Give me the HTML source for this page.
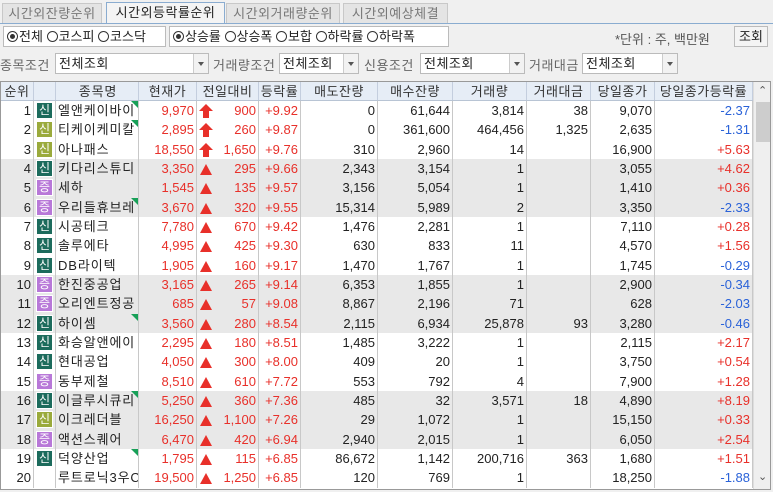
<!DOCTYPE html>
<html><head><meta charset="utf-8"><style>
*{margin:0;padding:0;box-sizing:border-box}
body{width:773px;height:492px;overflow:hidden;background:#f0f0f0;font-family:"Liberation Sans","Noto Sans CJK KR","NanumGothic",sans-serif;font-size:12px;color:#222;position:relative}
.a{position:absolute}
.tab{position:absolute;top:3px;height:20px;border:1px solid #c8c8c8;border-bottom:none;background:#e4e4e4;color:#777;font-size:13px;text-align:center;line-height:19px;letter-spacing:0.5px}
.box{position:absolute;background:#fff;border:1px solid #bbb;height:21px;line-height:19px;font-size:13px;padding-left:3px}
.dd{position:absolute;background:#fff;border:1px solid #bbb;height:21px;line-height:19px;font-size:13px;padding-left:3px;letter-spacing:0.5px}
.dd i{position:absolute;right:0;top:0;width:15px;height:19px;border-left:1px solid #ccc;background:#f2f2f2}
.dd i:after{content:"";position:absolute;left:4px;top:8px;border:3.5px solid transparent;border-top:4px solid #555}
.lbl{position:absolute;top:55px;color:#666;font-size:13px;letter-spacing:0.5px}
.rad{display:inline-block;width:11px;height:11px;border:1px solid #333;border-radius:50%;vertical-align:-1px;margin-right:1px;position:relative}
.rad.on:after{content:"";position:absolute;left:2px;top:2px;width:5px;height:5px;border-radius:50%;background:#333}
.grid{position:absolute;left:0;top:81px;width:771px;height:409px;border:1px solid #999;background:#fff;overflow:hidden}
.row{position:absolute;left:0;height:19.33px;width:752px;line-height:19px;font-size:13px}
.row>span{position:absolute;top:0;height:100%;border-right:1px solid #c8c8c8;text-align:right;padding-right:2px;white-space:nowrap;overflow:hidden}
.hd{background:#e6edf6;height:19px;top:0;border-bottom:1px solid #b8c4d4;letter-spacing:0.5px}
.hd>span{text-align:center;padding:0;color:#333;border-right:1px solid #c4cede}
.c0{left:0;width:33px}.c1{left:33px;width:22px}.c2{left:55px;width:83px}.c3{left:138px;width:58px}.c4{left:196px;width:62px}.c5{left:258px;width:42px}.c6{left:300px;width:77px}.c7{left:377px;width:75px}.c8{left:452px;width:74px}.c9{left:526px;width:64px}.c10{left:590px;width:64px}.c11{left:654px;width:98px}
.row>span.c2{text-align:left;padding-left:2px;letter-spacing:0.9px}
.row>span.c1{padding:0}
.row>span.c4 b{position:absolute;right:2px;font-weight:normal}
.g{background:#e8e8e8}
.r{color:#e8302a}.bl{color:#2a62d8}
.ic{position:absolute;left:2px;top:1px;width:17px;height:17px;color:#fff;font-size:12px;line-height:15px;text-align:center;border:1px solid #fff;font-style:normal}
.t{background:#1c6b5c}.o{background:#9aaa3c}.p{background:#b878d8}
.tri{position:absolute;right:0;top:0;width:0;height:0;border-left:7px solid transparent;border-top:7px solid #18a058}
.up{position:absolute;left:3px;top:5px;width:0;height:0;border-left:6px solid transparent;border-right:6px solid transparent;border-bottom:11px solid #e8302a}
.fa{position:absolute;left:2px;top:3px;width:14px;height:14px}
.fa:before{content:"";position:absolute;left:0;top:0;border-left:7px solid transparent;border-right:7px solid transparent;border-bottom:7px solid #e8302a}
.fa:after{content:"";position:absolute;left:4px;top:7px;width:6px;height:7px;background:#e8302a}
.sb{position:absolute;left:752px;top:0;width:18px;height:407px;background:#efefef;border-left:1px solid #ddd}
</style></head><body>
<div class="tab" style="left:2px;width:100px">시간외잔량순위</div>
<div class="tab" style="left:106px;width:119px;background:#f4f4f4;color:#222;border-color:#8aacd0;top:2px;height:22px">시간외등락률순위</div>
<div class="tab" style="left:226px;width:114px">시간외거래량순위</div>
<div class="tab" style="left:343px;width:105px">시간외예상체결</div>
<div class="a" style="left:0;top:23px;width:773px;height:1px;background:#8aacd0"></div>
<div class="box" style="left:3px;top:26px;width:163px"><span class="rad on"></span>전체 <span class="rad"></span>코스피 <span class="rad"></span>코스닥</div>
<div class="box" style="left:169px;top:26px;width:280px"><span class="rad on"></span>상승률 <span class="rad"></span>상승폭 <span class="rad"></span>보합 <span class="rad"></span>하락률 <span class="rad"></span>하락폭</div>
<div class="a" style="left:615px;top:29px;font-size:13px;color:#555">*단위 : 주, 백만원</div>
<div class="box" style="left:734px;top:26px;width:34px;background:#f4f4f4;padding-left:4px">조회</div>
<div class="lbl" style="left:0">종목조건</div>
<div class="dd" style="left:55px;top:53px;width:154px">전체조회<i></i></div>
<div class="lbl" style="left:213px">거래량조건</div>
<div class="dd" style="left:279px;top:53px;width:80px">전체조회<i></i></div>
<div class="lbl" style="left:364px">신용조건</div>
<div class="dd" style="left:420px;top:53px;width:105px">전체조회<i></i></div>
<div class="lbl" style="left:529px">거래대금</div>
<div class="dd" style="left:582px;top:53px;width:96px">전체조회<i></i></div>
<div class="grid">
<div class="row hd"><span class="c0">순위</span><span class="c1"></span><span class="c2" style="text-align:center">종목명</span><span class="c3">현재가</span><span class="c4" style="text-align:center">전일대비</span><span class="c5">등락률</span><span class="c6">매도잔량</span><span class="c7">매수잔량</span><span class="c8">거래량</span><span class="c9">거래대금</span><span class="c10">당일종가</span><span class="c11">당일종가등락률</span></div>
<div id="rows"></div>
<div class="sb"><div class="a" style="left:4px;top:2px;font-size:11px;color:#555">&#8963;</div><div class="a" style="left:2px;top:20px;width:14px;height:40px;background:#cdcdcd"></div><div class="a" style="left:4px;top:388px;font-size:11px;color:#555">&#8964;</div></div>
</div>
<script>
var d=[
[1,'t','엘앤케이바이',1,'9,970',1,'900','+9.92','0','61,644','3,814','38','9,070','-2.37'],
[2,'o','티케이케미칼',1,'2,895',1,'260','+9.87','0','361,600','464,456','1,325','2,635','-1.31'],
[3,'o','아나패스',0,'18,550',1,'1,650','+9.76','310','2,960','14','','16,900','+5.63'],
[4,'t','키다리스튜디',0,'3,350',0,'295','+9.66','2,343','3,154','1','','3,055','+4.62'],
[5,'p','세하',0,'1,545',0,'135','+9.57','3,156','5,054','1','','1,410','+0.36'],
[6,'p','우리들휴브레',1,'3,670',0,'320','+9.55','15,314','5,989','2','','3,350','-2.33'],
[7,'t','시공테크',0,'7,780',0,'670','+9.42','1,476','2,281','1','','7,110','+0.28'],
[8,'t','솔루에타',0,'4,995',0,'425','+9.30','630','833','11','','4,570','+1.56'],
[9,'t','DB라이텍',0,'1,905',0,'160','+9.17','1,470','1,767','1','','1,745','-0.29'],
[10,'p','한진중공업',0,'3,165',0,'265','+9.14','6,353','1,855','1','','2,900','-0.34'],
[11,'p','오리엔트정공',0,'685',0,'57','+9.08','8,867','2,196','71','','628','-2.03'],
[12,'t','하이셈',1,'3,560',0,'280','+8.54','2,115','6,934','25,878','93','3,280','-0.46'],
[13,'t','화승알앤에이',0,'2,295',0,'180','+8.51','1,485','3,222','1','','2,115','+2.17'],
[14,'t','현대공업',0,'4,050',0,'300','+8.00','409','20','1','','3,750','+0.54'],
[15,'p','동부제철',0,'8,510',0,'610','+7.72','553','792','4','','7,900','+1.28'],
[16,'t','이글루시큐리',1,'5,250',0,'360','+7.36','485','32','3,571','18','4,890','+8.19'],
[17,'o','이크레더블',0,'16,250',0,'1,100','+7.26','29','1,072','1','','15,150','+0.33'],
[18,'p','액션스퀘어',0,'6,470',0,'420','+6.94','2,940','2,015','1','','6,050','+2.54'],
[19,'t','덕양산업',1,'1,795',0,'115','+6.85','86,672','1,142','200,716','363','1,680','+1.51'],
[20,'','루트로닉3우C',0,'19,500',0,'1,250','+6.85','120','769','1','','18,250','-1.88']];
var h='';
d.forEach(function(r,i){
var top=19+i*19.33;var g=Math.floor(i/3)%2?' g':'';
var ic=r[1]?'<i class="ic '+r[1]+'">'+(r[1]=='p'?'증':'신')+'</i>':'';
var ar=r[5]?'<i class="fa"></i>':'<i class="up"></i>';
h+='<div class="row'+g+'" style="top:'+top+'px"><span class="c0">'+r[0]+'</span><span class="c1">'+ic+'</span><span class="c2">'+r[2]+(r[3]?'<i class="tri"></i>':'')+'</span><span class="c3 r">'+r[4]+'</span><span class="c4 r">'+ar+'<b>'+r[6]+'</b></span><span class="c5 r">'+r[7]+'</span><span class="c6">'+r[8]+'</span><span class="c7">'+r[9]+'</span><span class="c8">'+r[10]+'</span><span class="c9">'+r[11]+'</span><span class="c10">'+r[12]+'</span><span class="c11 '+(r[13][0]=='-'?'bl':'r')+'">'+r[13]+'</span></div>';
});
document.getElementById('rows').innerHTML=h;
</script>
</body></html>
